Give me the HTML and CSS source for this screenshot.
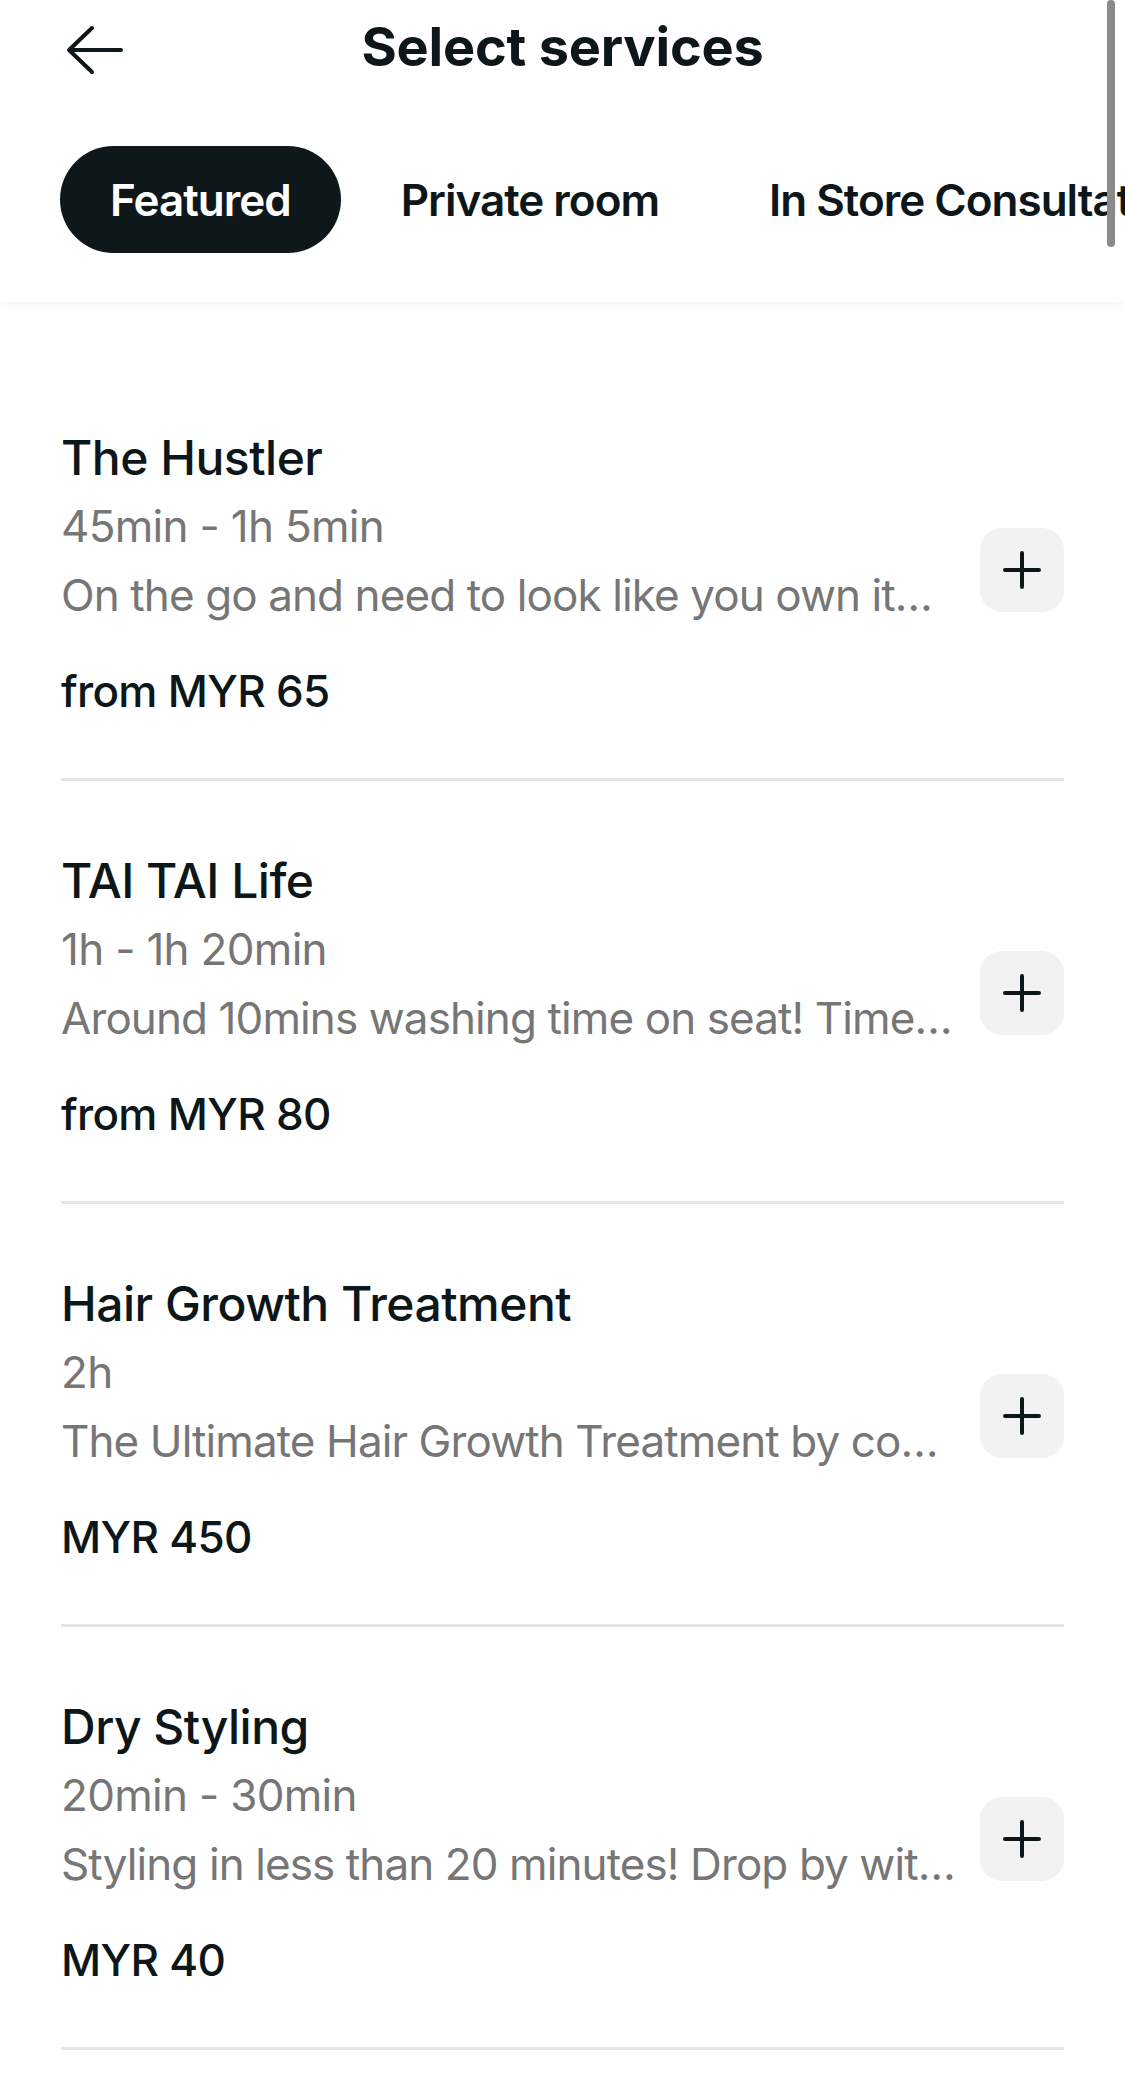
FILE: index.html
```html
<!DOCTYPE html>
<html lang="en">
<head>
<meta charset="utf-8">
<title>Select services</title>
<link rel="stylesheet" href="styles.css">
</head>
<body>
<div class="page">
  <header class="header">
    <div class="back">
      <svg width="58" height="50" viewBox="0 0 58 50" fill="none" stroke="#0d1619" stroke-width="4" stroke-linecap="round" stroke-linejoin="round"><path d="M3 25H55M26 3L3 25L26 47"/></svg>
    </div>
    <h1 class="title">Select services</h1>
    <div></div>
  </header>
  <nav class="tabs">
    <div class="tab active">Featured</div>
    <div class="tab">Private room</div>
    <div class="tab">In Store Consultation</div>
  </nav>
  <main class="list">
    <div class="item">
      <div class="info">
        <div class="name">The Hustler</div>
        <div class="meta">45min - 1h 5min</div>
        <div class="desc">On the go and need to look like you own it…</div>
        <div class="price">from MYR 65</div>
      </div>
      <button class="add"><svg width="38" height="38" viewBox="0 0 38 38" fill="none" stroke="#0d1619" stroke-width="4" stroke-linecap="round"><path d="M19 2V36M2 19H36"/></svg></button>
    </div>
    <div class="item">
      <div class="info">
        <div class="name">TAI TAI Life</div>
        <div class="meta">1h - 1h 20min</div>
        <div class="desc">Around 10mins washing time on seat! Time…</div>
        <div class="price">from MYR 80</div>
      </div>
      <button class="add"><svg width="38" height="38" viewBox="0 0 38 38" fill="none" stroke="#0d1619" stroke-width="4" stroke-linecap="round"><path d="M19 2V36M2 19H36"/></svg></button>
    </div>
    <div class="item">
      <div class="info">
        <div class="name">Hair Growth Treatment</div>
        <div class="meta">2h</div>
        <div class="desc">The Ultimate Hair Growth Treatment by co…</div>
        <div class="price">MYR 450</div>
      </div>
      <button class="add"><svg width="38" height="38" viewBox="0 0 38 38" fill="none" stroke="#0d1619" stroke-width="4" stroke-linecap="round"><path d="M19 2V36M2 19H36"/></svg></button>
    </div>
    <div class="item">
      <div class="info">
        <div class="name">Dry Styling</div>
        <div class="meta">20min - 30min</div>
        <div class="desc">Styling in less than 20 minutes! Drop by wit…</div>
        <div class="price">MYR 40</div>
      </div>
      <button class="add"><svg width="38" height="38" viewBox="0 0 38 38" fill="none" stroke="#0d1619" stroke-width="4" stroke-linecap="round"><path d="M19 2V36M2 19H36"/></svg></button>
    </div>
  </main>
  <div class="scrollbar"></div>
</div>
</body>
</html>
```
FILE: styles.css
```css
* { box-sizing: border-box; }
html, body {
  margin: 0;
  padding: 0;
  background: #ffffff;
}
body {
  font-family: Inter, "Noto Sans", "Liberation Sans", sans-serif;
  color: #0d1619;
  width: 1125px;
  height: 2074px;
  overflow: hidden;
}
.page {
  position: relative;
  width: 1125px;
  height: 2074px;
  overflow: hidden;
}
.header {
  height: 145px;
  display: grid;
  grid-template-columns: 1fr auto 1fr;
  align-items: start;
  padding-top: 14px;
  background: #fff;
  position: relative;
  z-index: 2;
}
.back {
  padding-left: 66px;
  padding-top: 11px;
  display: flex;
}
.title {
  margin: 0;
  font-size: 54px;
  line-height: 66px;
  font-weight: 700;
  letter-spacing: -0.2px;
  color: #0d1619;
}
.tabs {
  display: flex;
  gap: 10px;
  padding: 1px 0 49px 60px;
  background: #fff;
  white-space: nowrap;
  overflow: hidden;
  box-shadow: 0 -3px 6px rgba(0,0,0,0.035), 0 4px 8px rgba(0,0,0,0.04);
  position: relative;
  z-index: 1;
}
.tab {
  height: 107px;
  padding: 0 50px;
  border-radius: 54px;
  display: flex;
  align-items: center;
  font-size: 44px;
  font-weight: 600;
  letter-spacing: -1px;
  color: #0d1619;
  flex: none;
}
.tab.active {
  background: #0e171a;
  color: #ffffff;
}
.list {
  padding-top: 56px;
}
.item {
  margin: 0 61px;
  padding: 70px 0 54px;
  border-bottom: 3px solid #e5e5e5;
  display: flex;
  align-items: center;
  gap: 41px;
}
.info {
  flex: 1;
  min-width: 0;
}
.name {
  font-size: 48px;
  line-height: 60px;
  font-weight: 500;
  letter-spacing: -0.5px;
  color: #0d1619;
}
.meta {
  margin-top: 5px;
  font-size: 44px;
  line-height: 66px;
  color: #767676;
  letter-spacing: -0.7px;
}
.desc {
  margin-top: 3px;
  font-size: 44px;
  line-height: 66px;
  color: #767676;
  letter-spacing: -0.9px;
  white-space: nowrap;
}
.price {
  margin-top: 30px;
  font-size: 44px;
  line-height: 66px;
  font-weight: 500;
  letter-spacing: -0.7px;
  color: #0d1619;
}
.add {
  flex: none;
  width: 84px;
  height: 84px;
  border: none;
  border-radius: 22px;
  background: #f2f2f2;
  display: flex;
  align-items: center;
  justify-content: center;
  padding: 0;
  margin-bottom: 12px;
}
.scrollbar {
  position: absolute;
  top: 0;
  left: 1107px;
  width: 8px;
  height: 247px;
  border-radius: 4px;
  background: #8a8a8a;
  z-index: 5;
}
```
